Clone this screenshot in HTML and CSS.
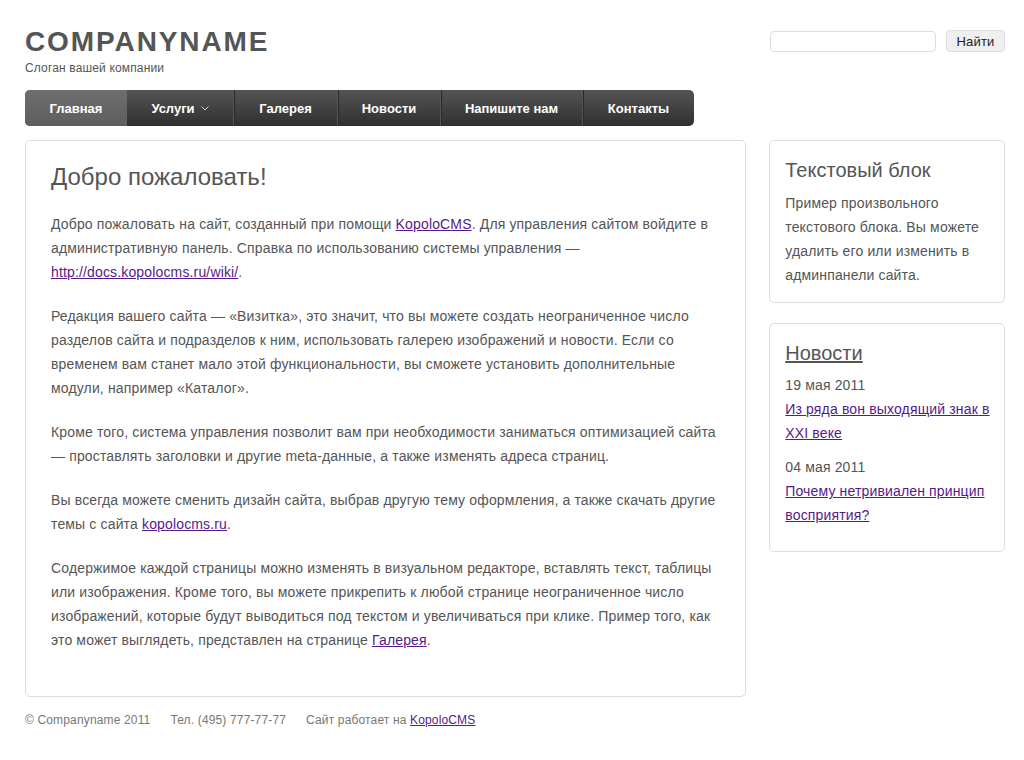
FILE: index.html
```html
<!DOCTYPE html>
<html lang="ru">
<head>
<meta charset="utf-8">
<title>Companyname</title>
<link rel="stylesheet" href="styles.css">
</head>
<body>
<div class="page">
  <header class="header">
    <div class="brand">
      <div class="logo">COMPANYNAME</div>
      <div class="slogan">Слоган вашей компании</div>
    </div>
    <form class="search">
      <input class="search-input" type="text">
      <button class="search-btn" type="button">Найти</button>
    </form>
  </header>
  <nav class="nav">
    <a class="nav-item active">Главная</a>
    <a class="nav-item">Услуги <svg class="caret" width="8" height="5" viewBox="0 0 8 5"><path d="M0.5 0.5 L4 4 L7.5 0.5" fill="none" stroke="#ccc" stroke-width="1"/></svg></a>
    <a class="nav-item">Галерея</a>
    <a class="nav-item">Новости</a>
    <a class="nav-item">Напишите нам</a>
    <a class="nav-item">Контакты</a>
  </nav>
  <div class="layout">
    <main class="content box">
      <h1 class="title">Добро пожаловать!</h1>
      <p>Добро пожаловать на сайт, созданный при помощи <a href="#">KopoloCMS</a>. Для управления сайтом войдите в административную панель. Справка по использованию системы управления — <a href="#">http://docs.kopolocms.ru/wiki/</a>.</p>
      <p>Редакция вашего сайта — «Визитка», это значит, что вы можете создать неограниченное число разделов сайта и подразделов к ним, использовать галерею изображений и новости. Если со временем вам станет мало этой функциональности, вы сможете установить дополнительные модули, например «Каталог».</p>
      <p>Кроме того, система управления позволит вам при необходимости заниматься оптимизацией сайта — проставлять заголовки и другие meta-данные, а также изменять адреса страниц.</p>
      <p>Вы всегда можете сменить дизайн сайта, выбрав другую тему оформления, а также скачать другие темы с сайта <a href="#">kopolocms.ru</a>.</p>
      <p>Содержимое каждой страницы можно изменять в визуальном редакторе, вставлять текст, таблицы или изображения. Кроме того, вы можете прикрепить к любой странице неограниченное число изображений, которые будут выводиться под текстом и увеличиваться при клике. Пример того, как это может выглядеть, представлен на странице <a href="#">Галерея</a>.</p>
    </main>
    <aside class="sidebar">
      <section class="box widget">
        <h2 class="widget-title">Текстовый блок</h2>
        <p class="widget-text">Пример произвольного текстового блока. Вы можете удалить его или изменить в админпанели сайта.</p>
      </section>
      <section class="box widget news">
        <h2 class="widget-title"><a class="title-link" href="#">Новости</a></h2>
        <div class="news-item">
          <div class="news-date">19 мая 2011</div>
          <a href="#">Из ряда вон выходящий знак в XXI веке</a>
        </div>
        <div class="news-item">
          <div class="news-date">04 мая 2011</div>
          <a href="#">Почему нетривиален принцип восприятия?</a>
        </div>
      </section>
    </aside>
  </div>
  <footer class="footer">
    <span>© Companyname 2011</span>
    <span>Тел. (495) 777-77-77</span>
    <span>Сайт работает на <a href="#">KopoloCMS</a></span>
  </footer>
</div>
</body>
</html>
```

FILE: styles.css
```css
html, body {
  margin: 0;
  padding: 0;
  background: #fff;
}
body {
  font-family: "Liberation Sans", Arial, sans-serif;
  font-size: 14px;
  letter-spacing: 0.15px;
  color: #555;
}
a {
  color: #551a8b;
  text-decoration: underline;
}
.page {
  width: 980px;
  padding: 25px 0 0 25px;
}
.header {
  display: flex;
  justify-content: space-between;
  align-items: flex-start;
  height: 65px;
}
.logo {
  font-size: 28px;
  font-weight: bold;
  letter-spacing: 1.9px;
  line-height: 34px;
  color: #555;
}
.slogan {
  font-size: 12px;
  line-height: 16px;
  margin-top: 1px;
  color: #555;
}
.search {
  display: flex;
  align-items: flex-start;
  gap: 10px;
  margin-top: 5px;
}
.search-input {
  width: 166px;
  height: 21px;
  box-sizing: border-box;
  border: 1px solid #ddd;
  border-radius: 4px;
  margin: 1px 0 0 0;
  padding: 0 4px;
}
.search-btn {
  width: 59px;
  height: 22px;
  box-sizing: border-box;
  background: #efefef;
  border: 1px solid #ddd;
  border-radius: 4px;
  font-family: "Liberation Sans", Arial, sans-serif;
  font-size: 13px;
  letter-spacing: 0.15px;
  color: #222;
  padding: 0;
}
.nav {
  display: flex;
  width: 669px;
  height: 36px;
  background: linear-gradient(#555, #2f2f2f);
  border-radius: 5px;
  overflow: hidden;
}
.nav-item {
  display: flex;
  align-items: center;
  justify-content: center;
  gap: 6px;
  box-sizing: border-box;
  height: 36px;
  color: #fff;
  font-size: 13px;
  font-weight: bold;
  letter-spacing: 0;
  text-decoration: none;
  border-left: 1px solid #555;
  box-shadow: inset 1px 0 0 #2a2a2a;
}
.nav-item:nth-child(1) { width: 102px; border-left: 0; box-shadow: none; }
.nav-item:nth-child(2) { width: 106px; border-left: 0; box-shadow: none; }
.nav-item:nth-child(3) { width: 104px; }
.nav-item:nth-child(4) { width: 103px; }
.nav-item:nth-child(5) { width: 142px; }
.nav-item:nth-child(6) { width: 112px; }
.nav-item.active {
  background: linear-gradient(#6e6e6e, #5e5e5e);
}
.caret {
  margin-top: 1px;
}
.layout {
  display: flex;
  gap: 23px;
  margin-top: 14px;
  align-items: flex-start;
}
.box {
  border: 1px solid #ddd;
  border-radius: 5px;
  background: #fff;
}
.content {
  width: 722px;
  box-sizing: border-box;
  padding: 20px 25px 24px 25px;
  line-height: 24px;
}
.title {
  font-size: 24px;
  font-weight: normal;
  letter-spacing: 0;
  line-height: 32px;
  margin: 0 0 19px 0;
  color: #555;
}
.content p {
  margin: 0 0 20px 0;
}
.sidebar {
  width: 236px;
  display: flex;
  flex-direction: column;
  gap: 20px;
}
.widget {
  padding: 15px 10px 15px 15px;
  line-height: 24px;
}
.widget-title {
  font-size: 20px;
  font-weight: normal;
  letter-spacing: 0;
  line-height: 28px;
  margin: 0 0 7px 0;
  color: #555;
}
.widget-text {
  margin: 0;
}
.title-link {
  color: #555;
}
.news {
  padding-bottom: 14px;
}
.news .widget-title {
  margin-bottom: 6px;
}
.news-item {
  margin-bottom: 10px;
}
.news-date {
  color: #555;
}
.footer {
  display: flex;
  gap: 20px;
  font-size: 12px;
  color: #777;
  line-height: 16px;
  margin-top: 15px;
  padding-bottom: 20px;
}
.footer a {
  color: #551a8b;
}
```
